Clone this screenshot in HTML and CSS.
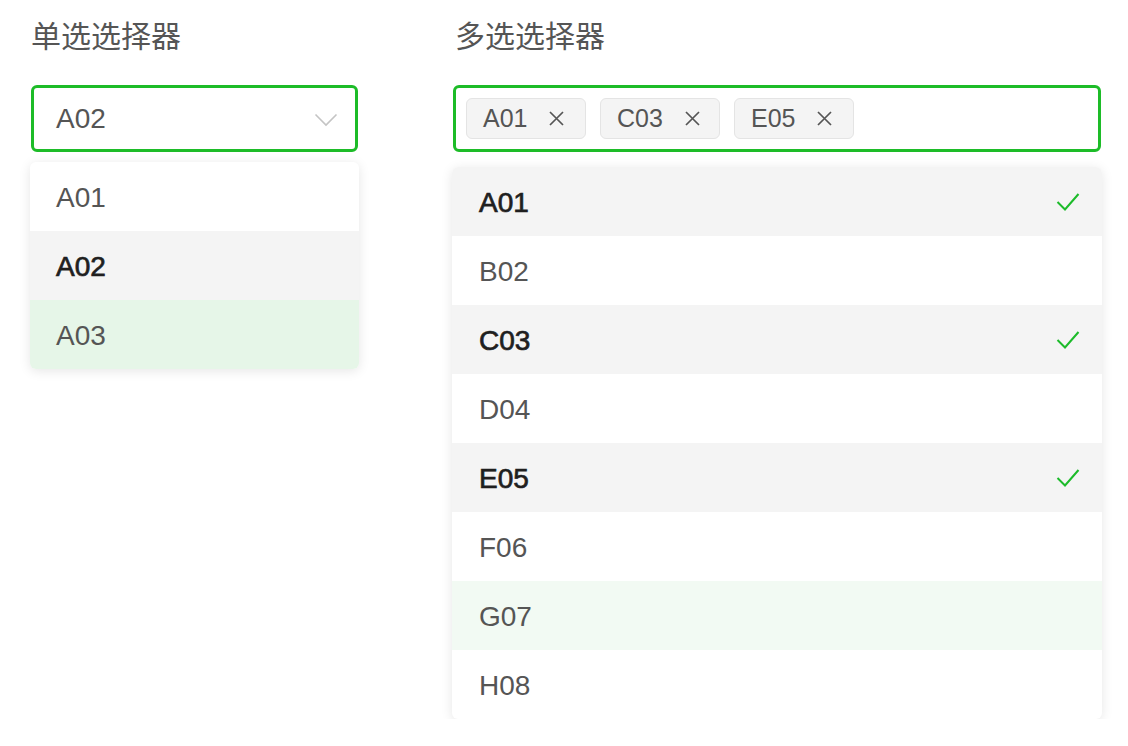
FILE: index.html
```html
<!DOCTYPE html>
<html lang="zh-CN">
<head>
  <meta charset="UTF-8" />
  <meta name="viewport" content="width=device-width, initial-scale=1.0"/>
  <title>选择器</title>
  <link rel="stylesheet" href="styles.css">
</head>
<body>
  <div class="page">
    <!-- 单选 -->
    <section class="field field-single">
      <h2 class="field-title">单选选择器</h2>
      <div class="select-box">
        <span class="select-value">A02</span>
        <svg class="chevron" width="24" height="14" viewBox="0 0 24 14">
          <path d="M1.5 1.5 L12 12 L22.5 1.5" fill="none" stroke="#c4c4c4" stroke-width="1.6"/>
        </svg>
      </div>
      <ul class="dropdown dropdown-single">
        <li class="option">A01</li>
        <li class="option is-selected">A02</li>
        <li class="option is-hover">A03</li>
      </ul>
    </section>

    <!-- 多选 -->
    <section class="field field-multi">
      <h2 class="field-title">多选选择器</h2>
      <div class="select-box multi-box" id="tagBox"></div>
      <ul class="dropdown dropdown-multi" id="multiList"></ul>
    </section>
  </div>

  <script>
    const options = ['A01', 'B02', 'C03', 'D04', 'E05', 'F06', 'G07', 'H08'];
    const picked = ['A01', 'C03', 'E05'];
    const hover = 'G07';
    const list = document.getElementById('multiList');
    const tagBox = document.getElementById('tagBox');

    picked.forEach(name => {
      const tag = document.createElement('span');
      tag.className = 'tag';
      tag.innerHTML = `${name}<svg class="tag-close" width="15" height="15" viewBox="0 0 15 15"><path d="M1 1 L14 14 M14 1 L1 14" stroke="#555" stroke-width="1.7"/></svg>`;
      tagBox.appendChild(tag);
    });

    options.forEach(name => {
      const li = document.createElement('li');
      li.className = 'option';
      if (picked.includes(name)) li.classList.add('is-selected');
      if (name === hover) li.classList.add('is-hover-light');
      li.innerHTML = `<span>${name}</span>` + (picked.includes(name)
        ? '<svg class="check" width="24" height="20" viewBox="0 0 24 20"><path d="M1.5 10 L9 17.5 L22.5 2" fill="none" stroke="#1cbb2a" stroke-width="2"/></svg>'
        : '');
      list.appendChild(li);
    });
  </script>
</body>
</html>
```

FILE: styles.css
```css
body {
  margin: 0;
  font-family: "Liberation Sans", "Noto Sans CJK SC", Arial, sans-serif;
  background-color: #fff;
  color: #555;
}

.page {
  display: flex;
  gap: 95px;
  padding: 15px 0 0 31px;
}

.field-single {
  width: 327px;
}

.field-multi {
  width: 648px;
}

.field-title {
  margin: 0 0 31px;
  font-family: "Noto Sans CJK SC", sans-serif;
  font-size: 30px;
  font-weight: 400;
  line-height: 39px;
  color: #555;
}

.field-multi .field-title {
  padding-left: 2px;
}

.select-box {
  box-sizing: border-box;
  height: 67px;
  border: 3px solid #1dbc28;
  border-radius: 6px;
  display: flex;
  align-items: center;
  justify-content: space-between;
  padding: 0 17px 0 22px;
}

.select-value {
  font-size: 28px;
  color: #555;
}

.chevron {
  margin-top: 2px;
}

.multi-box {
  justify-content: flex-start;
  gap: 14px;
  padding: 0 10px;
}

.tag {
  box-sizing: border-box;
  display: flex;
  align-items: center;
  height: 41px;
  width: 120px;
  padding: 0 0 0 16px;
  background-color: #f4f4f4;
  border: 1px solid #e4e4e4;
  border-radius: 6px;
  font-size: 25px;
  color: #555;
}

.tag-close {
  margin-left: 22px;
}

.dropdown {
  list-style: none;
  margin: 10px 0 0;
  padding: 0;
  background-color: #fff;
  border-radius: 6px;
  overflow: hidden;
  box-shadow: 0 2px 12px rgba(0, 0, 0, 0.1);
}

.dropdown-multi {
  margin-top: 15px;
  margin-left: -1px;
  width: 650px;
}

.dropdown-single {
  margin-left: -1px;
  width: 329px;
}

.option {
  box-sizing: border-box;
  height: 69px;
  display: flex;
  align-items: center;
  justify-content: space-between;
  padding: 2px 22px 0 26px;
  font-size: 28px;
  color: #555;
}

.dropdown-multi .option {
  padding-left: 27px;
}

.option.is-selected {
  background-color: #f4f4f4;
  color: #1f1f1f;
  -webkit-text-stroke: 0.7px #1f1f1f;
}

.option.is-selected .check {
  margin-top: -2px;
}

.option.is-hover {
  background-color: #e6f6e8;
}

.option.is-hover-light {
  background-color: #f2faf3;
}
```
